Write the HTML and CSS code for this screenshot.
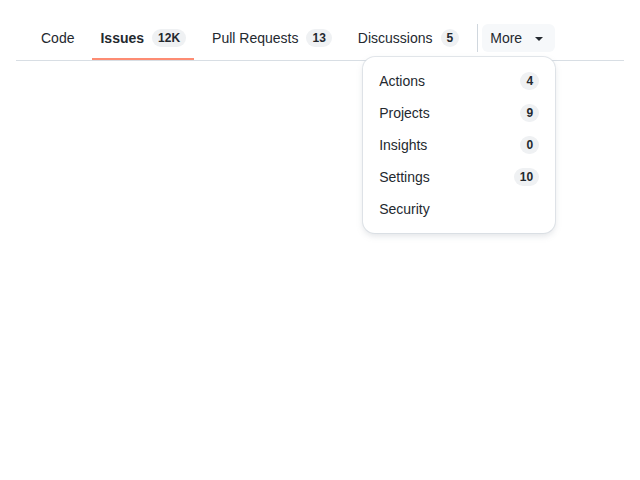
FILE: index.html
```html
<!DOCTYPE html>
<html>
<head>
<meta charset="utf-8">
<link rel="stylesheet" href="styles.css">
</head>
<body>
<div class="page">
  <nav class="tabnav">
    <ul class="tabs">
      <li class="tab"><span class="tab-label">Code</span></li>
      <li class="tab selected"><span class="tab-label">Issues</span><span class="counter">12K</span></li>
      <li class="tab"><span class="tab-label">Pull Requests</span><span class="counter">13</span></li>
      <li class="tab"><span class="tab-label">Discussions</span><span class="counter">5</span></li>
    </ul>
    <div class="divider"></div>
    <div class="more">
      <button class="more-btn">More <span class="caret"></span></button>
      <div class="menu">
        <div class="menu-item"><span>Actions</span><span class="counter">4</span></div>
        <div class="menu-item"><span>Projects</span><span class="counter">9</span></div>
        <div class="menu-item"><span>Insights</span><span class="counter">0</span></div>
        <div class="menu-item"><span>Settings</span><span class="counter">10</span></div>
        <div class="menu-item"><span>Security</span></div>
      </div>
    </div>
  </nav>
</div>
</body>
</html>
```
FILE: styles.css
```css
* { box-sizing: border-box; }
html, body { height: 100%; }
body {
  margin: 0;
  font-family: "Liberation Sans", Arial, sans-serif;
  font-size: 14px;
  color: #24292f;
  background: #ffffff;
}
.page {
  min-height: 100%;
  padding: 16px 16px 0 16px;
}
.tabnav {
  position: relative;
  z-index: 1;
  display: flex;
  align-items: center;
  height: 45px;
  border-bottom: 1px solid #d8dee4;
  padding-left: 17px;
}
.tabs {
  display: flex;
  list-style: none;
  margin: 0;
  padding: 0;
  height: 100%;
  gap: 10px;
}
.tab {
  position: relative;
  display: flex;
  align-items: center;
  gap: 8px;
  padding: 0 8px;
  height: 100%;
  white-space: nowrap;
}
.tab.selected .tab-label { font-weight: bold; }
.tab.selected::after {
  content: "";
  position: absolute;
  left: 0;
  right: 0;
  bottom: 0;
  height: 2px;
  background: #fd8c73;
}
.counter {
  display: inline-block;
  min-width: 16px;
  padding: 0 6px;
  font-size: 12px;
  font-weight: bold;
  line-height: 18px;
  text-align: center;
  border-radius: 9px;
  background: #eff1f3;
  color: #24292f;
}
.divider {
  width: 1px;
  height: 28px;
  background: #d0d7de;
  margin-left: 10px;
}
.more {
  position: relative;
  margin-left: 4px;
}
.more-btn {
  display: flex;
  align-items: center;
  gap: 13px;
  height: 28px;
  padding: 0 12px 0 8px;
  border: none;
  border-radius: 6px;
  background: #f6f8fa;
  font-family: inherit;
  font-size: 14px;
  color: #24292f;
}
.caret {
  width: 0;
  height: 0;
  border-left: 4px solid transparent;
  border-right: 4px solid transparent;
  border-top: 4px solid #24292f;
  margin-top: 1px;
}
.menu {
  position: absolute;
  z-index: 10;
  top: 33px;
  right: 0;
  width: 192px;
  padding: 8px 0;
  background: #ffffff;
  border-radius: 12px;
  box-shadow: 0 0 0 1px rgba(208, 215, 222, 0.6), 0 3px 6px rgba(140, 149, 159, 0.25);
}
.menu-item {
  display: flex;
  align-items: center;
  justify-content: space-between;
  height: 32px;
  padding: 0 16px;
}
```
